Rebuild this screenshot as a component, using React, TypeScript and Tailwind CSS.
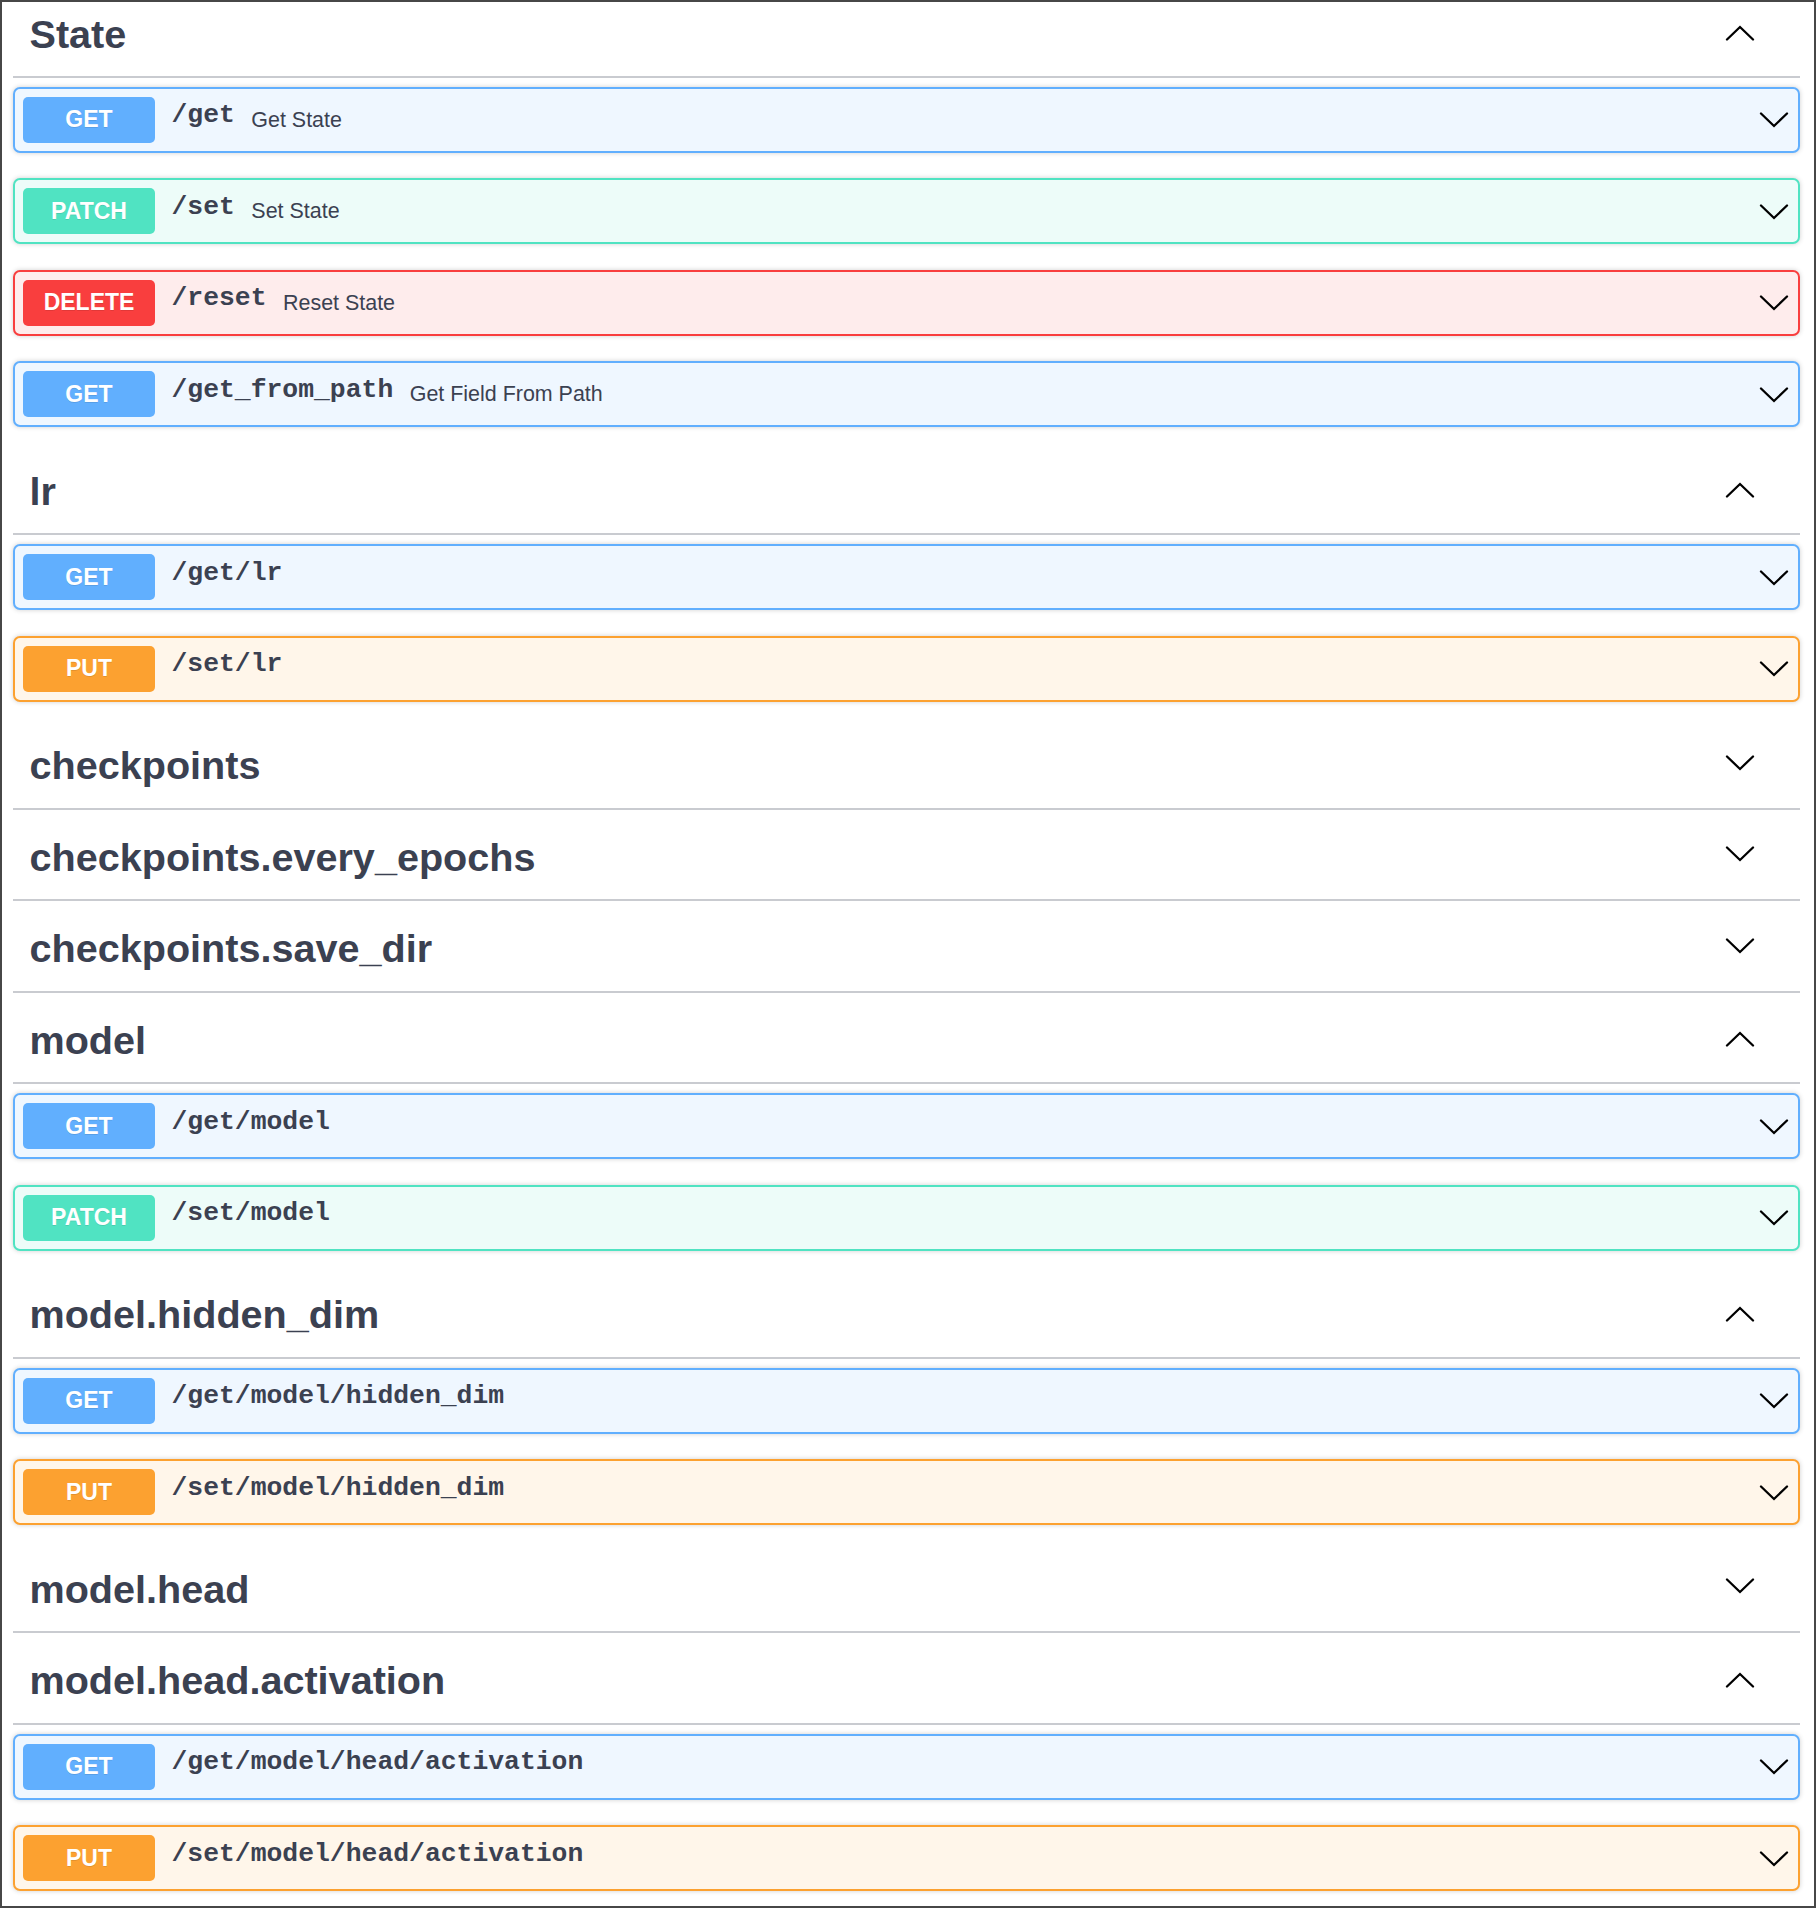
import React from "react";

type Method = "GET" | "PATCH" | "DELETE" | "PUT";

type Operation = {
  method: Method;
  path: string;
  summary?: string;
};

type Tag = {
  name: string;
  open: boolean;
  ops: Operation[];
};

const methodStyles: Record<Method, { card: string; badge: string }> = {
  GET: { card: "border-[#61affe] bg-[#eff7ff]", badge: "bg-[#61affe]" },
  PATCH: { card: "border-[#50e3c2] bg-[#edfcf9]", badge: "bg-[#50e3c2]" },
  DELETE: { card: "border-[#f93e3e] bg-[#feecec]", badge: "bg-[#f93e3e]" },
  PUT: { card: "border-[#fca130] bg-[#fff6ea]", badge: "bg-[#fca130]" },
};

const tags: Tag[] = [
  {
    name: "State",
    open: true,
    ops: [
      { method: "GET", path: "/get", summary: "Get State" },
      { method: "PATCH", path: "/set", summary: "Set State" },
      { method: "DELETE", path: "/reset", summary: "Reset State" },
      { method: "GET", path: "/get_from_path", summary: "Get Field From Path" },
    ],
  },
  {
    name: "lr",
    open: true,
    ops: [
      { method: "GET", path: "/get/lr" },
      { method: "PUT", path: "/set/lr" },
    ],
  },
  { name: "checkpoints", open: false, ops: [] },
  { name: "checkpoints.every_epochs", open: false, ops: [] },
  { name: "checkpoints.save_dir", open: false, ops: [] },
  {
    name: "model",
    open: true,
    ops: [
      { method: "GET", path: "/get/model" },
      { method: "PATCH", path: "/set/model" },
    ],
  },
  {
    name: "model.hidden_dim",
    open: true,
    ops: [
      { method: "GET", path: "/get/model/hidden_dim" },
      { method: "PUT", path: "/set/model/hidden_dim" },
    ],
  },
  { name: "model.head", open: false, ops: [] },
  {
    name: "model.head.activation",
    open: true,
    ops: [
      { method: "GET", path: "/get/model/head/activation" },
      { method: "PUT", path: "/set/model/head/activation" },
    ],
  },
];

function Chevron({ up }: { up?: boolean }) {
  return (
    <svg
      width="30"
      height="16"
      viewBox="0 0 30 16"
      fill="none"
      stroke="#000"
      strokeWidth="2.3"
      strokeLinecap="round"
      strokeLinejoin="miter"
      className="block shrink-0"
    >
      <polyline points={up ? "2,14.5 15,2 28,14.5" : "2,1.5 15,14 28,1.5"} />
    </svg>
  );
}

function OperationRow({ op }: { op: Operation }) {
  const s = methodStyles[op.method];
  return (
    <div
      className={
        "mb-[25.5px] flex h-[66px] items-start rounded-[7px] border-2 px-[8px] pt-[8px] shadow-[0_0_5px_rgba(0,0,0,0.19)] " +
        s.card
      }
    >
      <span
        className={
          "flex h-[46px] w-[132px] shrink-0 items-center justify-center rounded-[5px] text-[23px] font-bold text-white [text-shadow:0_1px_0_rgba(0,0,0,0.1)] " +
          s.badge
        }
      >
        {op.method}
      </span>
      <span className="mt-[3.5px] px-[16.5px] font-['Liberation_Mono',monospace] text-[26.4px] font-bold leading-[30px] text-[#3b4151]">
        {op.path}
      </span>
      {op.summary && (
        <span className="mt-[11px] text-[21.45px] leading-[25px] text-[#3b4151]">{op.summary}</span>
      )}
      <span className="mt-[15.7px] ml-auto mr-[1.5px]">
        <Chevron />
      </span>
    </div>
  );
}

function TagSection({ tag, first }: { tag: Tag; first: boolean }) {
  const textTop = first ? "mt-[10px]" : "mt-[16px]";
  const arrowTop = first ? "mt-[22.5px]" : tag.open ? "mt-[29.5px]" : "mt-[27.5px]";
  return (
    <section>
      <div
        className={
          "mb-[9px] flex items-start justify-between border-b-2 border-[#c9cbd0] pl-[16.5px] pr-[45px] " +
          (first ? "h-[75.5px]" : "h-[82.5px]")
        }
      >
        <h3 className={"text-[39.6px] font-bold leading-[45px] text-[#3b4151] " + textTop}>{tag.name}</h3>
        <span className={arrowTop}>
          <Chevron up={tag.open} />
        </span>
      </div>
      {tag.open && (
        <div>
          {tag.ops.map((op) => (
            <OperationRow key={op.method + op.path} op={op} />
          ))}
        </div>
      )}
    </section>
  );
}

export default function App() {
  return (
    <div className="h-[1908px] w-[1816px] overflow-hidden border-2 border-[#474747] bg-white font-['Liberation_Sans',Arial,sans-serif]">
      <div className="pl-[11px] pr-[14px]">
        {tags.map((tag, i) => (
          <TagSection key={tag.name} tag={tag} first={i === 0} />
        ))}
      </div>
    </div>
  );
}
